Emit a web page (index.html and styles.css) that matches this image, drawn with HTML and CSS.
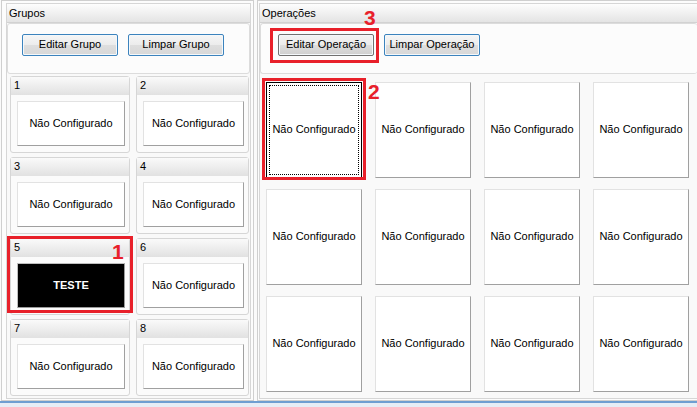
FILE: index.html
```html
<!DOCTYPE html>
<html>
<head>
	<meta charset="utf-8">
	<title>Grupos e Operações</title>
	<link rel="stylesheet" href="styles.css">
</head>
<body>
<div class="app">
	<div class="panels">
		<section class="panel panelGroups">
			<div class="panelInner">
				<div class="panelTitle">Grupos</div>
				<div class="toolbar">
					<button class="btn">Editar Grupo</button>
					<button class="btn">Limpar Grupo</button>
				</div>
				<div class="groupGrid">
					<div class="group"><div class="groupHead">1</div><button class="slot">Não Configurado</button></div>
					<div class="group"><div class="groupHead">2</div><button class="slot">Não Configurado</button></div>
					<div class="group"><div class="groupHead">3</div><button class="slot">Não Configurado</button></div>
					<div class="group"><div class="groupHead">4</div><button class="slot">Não Configurado</button></div>
					<div class="group"><div class="groupHead">5</div><button class="slot slotSet">TESTE</button></div>
					<div class="group"><div class="groupHead">6</div><button class="slot">Não Configurado</button></div>
					<div class="group"><div class="groupHead">7</div><button class="slot">Não Configurado</button></div>
					<div class="group"><div class="groupHead">8</div><button class="slot">Não Configurado</button></div>
				</div>
			</div>
		</section>
		<section class="panel panelOps">
			<div class="panelInner">
				<div class="panelTitle">Operações</div>
				<div class="toolbar toolbarOps">
					<button class="btn btnPlain">Editar Operação</button>
					<button class="btn">Limpar Operação</button>
				</div>
				<div class="opGrid">
					<button class="slot opSlot focused">Não Configurado</button>
					<button class="slot opSlot">Não Configurado</button>
					<button class="slot opSlot">Não Configurado</button>
					<button class="slot opSlot">Não Configurado</button>
					<button class="slot opSlot">Não Configurado</button>
					<button class="slot opSlot">Não Configurado</button>
					<button class="slot opSlot">Não Configurado</button>
					<button class="slot opSlot">Não Configurado</button>
					<button class="slot opSlot">Não Configurado</button>
					<button class="slot opSlot">Não Configurado</button>
					<button class="slot opSlot">Não Configurado</button>
					<button class="slot opSlot">Não Configurado</button>
				</div>
			</div>
		</section>
	</div>
	<div class="statusLine"></div>

	<!-- annotation marks drawn over the screenshot -->
	<div class="mark mark1"></div><span class="markNum num1">1</span>
	<div class="mark mark2"></div><span class="markNum num2">2</span>
	<div class="mark mark3"></div><span class="markNum num3">3</span>
</div>
</body>
</html>
```

FILE: styles.css
```css
* {
	box-sizing: border-box;
}

body {
	margin: 0;
	background: #fafafa;
	font: 11px/1.2 "Liberation Sans", Arial, sans-serif;
	color: #000;
}

.app {
	position: relative;
	width: 697px;
	height: 407px;
	overflow: hidden;
}

.panels {
	display: flex;
	height: 401px;
}

.panel {
	height: 100%;
	border: 1px solid #cfcfcf;
	background: #fcfcfc;
}

.panelGroups {
	width: 253px;
	margin-left: 1px;
	padding: 2px 2px 1px 4px;
}

.panelOps {
	flex: 1;
	margin-left: 3px;
	padding: 2px 0 1px 1px;
	border-right: none;
}

.panelInner {
	height: 100%;
	border: 1px solid #d6d6d6;
	background: #f9f9f9;
}

.panelOps .panelInner {
	border-right: none;
}

.panelTitle {
	height: 19px;
	line-height: 18px;
	padding-left: 2px;
	background: linear-gradient(#fdfdfd, #e4e4e4);
	border-bottom: 1px solid #d2d2d2;
}

.toolbar {
	display: flex;
	gap: 10px;
	height: 51px;
	padding: 10px 14px 0;
	border: 1px solid #dcdcdc;
	border-radius: 3px;
	background: #fcfcfc;
}

.toolbarOps {
	padding-left: 17px;
	border-right: none;
}

.btn {
	width: 96px;
	height: 22px;
	padding: 0;
	font: inherit;
	color: #000;
	border: 1px solid #3c83bd;
	border-radius: 2px;
	background: linear-gradient(#f6f6f6 0%, #ececec 50%, #dedede 51%, #d8d8d8 100%);
	box-shadow: inset 0 0 0 1px #f4f8fb;
}

.btnPlain {
	border-color: #707070;
	background: linear-gradient(#f3f3f3 0%, #ebebeb 50%, #dddddd 51%, #cfcfcf 100%);
}

.groupGrid {
	display: grid;
	grid-template-columns: 120px 113px;
	grid-auto-rows: 77px;
	column-gap: 6px;
	row-gap: 4px;
	margin-top: 2px;
	padding-left: 3px;
}

.group {
	display: flex;
	flex-direction: column;
	border: 1px solid #d6d6d6;
	border-radius: 3px;
	background: #fbfbfb;
}

.groupHead {
	height: 18px;
	line-height: 17px;
	padding-left: 3px;
	background: linear-gradient(#fafafa, #e1e1e1);
}

.slot {
	padding: 0;
	font: inherit;
	color: #000;
	background: #fff;
	border: 1px solid;
	border-color: #e2e2e2 #a0a0a0 #a0a0a0 #e2e2e2;
}

.group .slot {
	flex: 1;
	margin: 6px 4px 6px 6px;
}

.slotSet {
	background: #000;
	color: #fff;
	font-weight: bold;
	border-color: #bdbdbd #9a9a9a #9a9a9a #bdbdbd;
}

.opGrid {
	display: grid;
	grid-template-columns: repeat(4, 96px);
	grid-auto-rows: 96px;
	column-gap: 13px;
	row-gap: 11px;
	margin-top: 8px;
	padding-left: 6px;
}

.focused {
	border: 1px solid #000;
	outline: 1px dotted #000;
	outline-offset: -4px;
}

.statusLine {
	height: 6px;
	border-top: 2px solid #6f9ed1;
	background: #e6edf6;
}

.mark {
	position: absolute;
	border: 3px solid #e8202a;
}

.mark1 {
	left: 7px;
	top: 236px;
	width: 126px;
	height: 77px;
}

.mark2 {
	left: 262px;
	top: 78px;
	width: 104px;
	height: 102px;
}

.mark3 {
	left: 270px;
	top: 28px;
	width: 109px;
	height: 35px;
}

.markNum {
	position: absolute;
	font: bold 21px/1 "Liberation Sans", Arial, sans-serif;
	color: #e8202a;
}

.num1 {
	left: 112px;
	top: 241px;
}

.num2 {
	left: 368px;
	top: 81px;
}

.num3 {
	left: 364px;
	top: 7px;
}
```
